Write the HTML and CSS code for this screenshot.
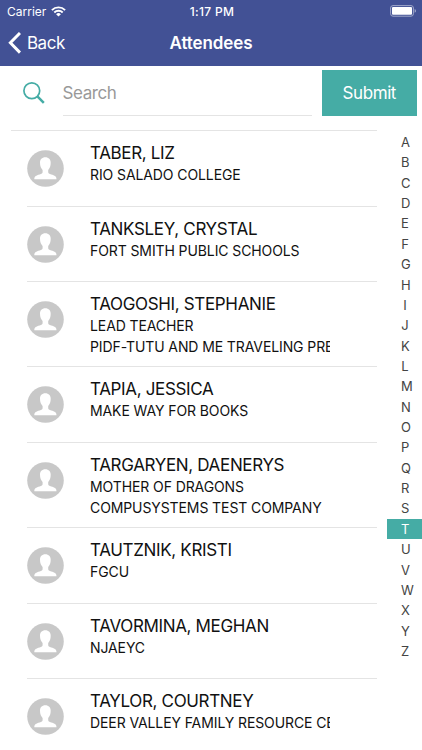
FILE: index.html
```
<!DOCTYPE html>
<html lang="en">
<head>
  <meta charset="UTF-8" />
  <meta name="viewport" content="width=device-width, initial-scale=1.0"/>
  <title>Attendees</title>
  <link rel="stylesheet" href="styles.css">
</head>
<body>
  <svg class="defs" width="0" height="0">
    <symbol id="avatar" viewBox="0 0 37 37">
      <circle cx="18.5" cy="18.5" r="18.3" fill="#c8c8c8"/>
      <path fill="#fff" d="M18.3 7.2c-3.400 0-5.400 2.300-5.300 5.500 0 3.300 1 5.500 2.600 7.200v2.200c0 1.400-1 1.800-3 2.400-3.500 1-5.300 1.700-5.300 4.700h22.200c0-3-1.800-3.700-5.300-4.700-2-.6-3-1-3-2.400v-2.200c1.600-1.700 2.500-3.900 2.500-7.200 0-3.200-2-5.500-5.400-5.500z"/>
    </symbol>
  </svg>

  <header>
    <div class="status-bar">
      <div class="carrier">
        <span>Carrier</span>
        <svg width="15" height="11" viewBox="0 0 15 11" fill="none" stroke="#fff" stroke-width="1.9">
          <path d="M.9 4.100a9.300 9.300 0 0 1 13.200 0M3.300 6.500a5.900 5.900 0 0 1 8.400 0"/>
          <path fill="#fff" stroke="none" d="M7.500 10.600L5.100 8.200a3.400 3.400 0 0 1 4.800 0z"/>
        </svg>
      </div>
      <div class="time">1:17 PM</div>
      <svg class="battery" width="27" height="12" viewBox="0 0 27 12">
        <rect x=".6" y=".6" width="22.800" height="10.600" rx="2.400" fill="none" stroke="#a0a8ca"/>
        <rect x="2" y="2" width="20" height="7.800" rx="1" fill="#fff"/>
        <path d="M24.600 4c1.900.6 1.900 3.200 0 3.800z" fill="#a0a8ca"/>
      </svg>
    </div>
    <div class="nav-bar">
      <a class="back" href="#">
        <svg width="13" height="22" viewBox="0 0 13 22" fill="none" stroke="#fff" stroke-width="3">
          <path d="M12 1L2.400 10.800l9.600 9.800"/>
        </svg>
        <span>Back</span>
      </a>
      <h1>Attendees</h1>
    </div>
  </header>

  <form class="search-bar" id="searchForm">
    <svg width="22" height="22" viewBox="0 0 22 22" fill="none" stroke="#45aca5">
      <circle cx="8.800" cy="8.800" r="7.900" stroke-width="1.700"/>
      <path d="M14.400 14.400l6.400 6.400" stroke-width="2.500"/>
    </svg>
    <input type="text" id="search" placeholder="Search" />
    <button type="submit">Submit</button>
  </form>

  <main>
    <ul class="attendees">
      <li>
        <svg class="avatar"><use href="#avatar"/></svg>
        <div class="info">
          <h2>TABER, LIZ</h2>
          <p>RIO SALADO COLLEGE</p>
        </div>
      </li>
      <li>
        <svg class="avatar"><use href="#avatar"/></svg>
        <div class="info">
          <h2>TANKSLEY, CRYSTAL</h2>
          <p>FORT SMITH PUBLIC SCHOOLS</p>
        </div>
      </li>
      <li class="with-title">
        <svg class="avatar"><use href="#avatar"/></svg>
        <div class="info">
          <h2>TAOGOSHI, STEPHANIE</h2>
          <p>LEAD TEACHER</p>
          <p>PIDF-TUTU AND ME TRAVELING PRE</p>
        </div>
      </li>
      <li>
        <svg class="avatar"><use href="#avatar"/></svg>
        <div class="info">
          <h2>TAPIA, JESSICA</h2>
          <p>MAKE WAY FOR BOOKS</p>
        </div>
      </li>
      <li class="with-title">
        <svg class="avatar"><use href="#avatar"/></svg>
        <div class="info">
          <h2>TARGARYEN, DAENERYS</h2>
          <p>MOTHER OF DRAGONS</p>
          <p>COMPUSYSTEMS TEST COMPANY</p>
        </div>
      </li>
      <li>
        <svg class="avatar"><use href="#avatar"/></svg>
        <div class="info">
          <h2>TAUTZNIK, KRISTI</h2>
          <p>FGCU</p>
        </div>
      </li>
      <li>
        <svg class="avatar"><use href="#avatar"/></svg>
        <div class="info">
          <h2>TAVORMINA, MEGHAN</h2>
          <p>NJAEYC</p>
        </div>
      </li>
      <li>
        <svg class="avatar"><use href="#avatar"/></svg>
        <div class="info">
          <h2>TAYLOR, COURTNEY</h2>
          <p>DEER VALLEY FAMILY RESOURCE CE</p>
        </div>
      </li>
    </ul>

    <nav class="letters">
      <a>A</a>
      <a>B</a>
      <a>C</a>
      <a>D</a>
      <a>E</a>
      <a>F</a>
      <a>G</a>
      <a>H</a>
      <a>I</a>
      <a>J</a>
      <a>K</a>
      <a>L</a>
      <a>M</a>
      <a>N</a>
      <a>O</a>
      <a>P</a>
      <a>Q</a>
      <a>R</a>
      <a>S</a>
      <a class="active">T</a>
      <a>U</a>
      <a>V</a>
      <a>W</a>
      <a>X</a>
      <a>Y</a>
      <a>Z</a>
    </nav>
  </main>
</body>
</html>
```
FILE: styles.css
```
* {
  box-sizing: border-box;
  margin: 0;
  padding: 0;
}

body {
  font-family: Inter, "Liberation Sans", sans-serif;
  height: 750px;
  display: flex;
  flex-direction: column;
  overflow: hidden;
  background-color: #fff;
  color: #111;
}

.defs {
  display: none;
}

header {
  height: 65.5px;
  flex-shrink: 0;
  background-color: #425195;
  color: #fff;
}

.status-bar {
  height: 22px;
  padding: 0 5px 0 7px;
  display: grid;
  grid-template-columns: 1fr auto 1fr;
  align-items: center;
  font-size: 12px;
}

.carrier {
  display: flex;
  align-items: center;
  gap: 5px;
}

.time {
  font-weight: 500;
  letter-spacing: 0.3px;
}

.battery {
  justify-self: end;
}

.nav-bar {
  height: 42px;
  padding: 0 8px;
  display: grid;
  grid-template-columns: 1fr auto 1fr;
  align-items: center;
}

.back {
  display: flex;
  align-items: center;
  gap: 6px;
  color: #fff;
  font-size: 17px;
  letter-spacing: -0.5px;
  text-decoration: none;
}

h1 {
  font-size: 17px;
  font-weight: 600;
  letter-spacing: -0.1px;
}

.search-bar {
  height: 64.5px;
  flex-shrink: 0;
  padding: 4.5px 5px 0 23px;
  display: flex;
  align-items: flex-start;
}

.search-bar svg {
  margin-top: 12px;
}

input {
  width: 249px;
  height: 46px;
  margin: 0 10px 0 17.5px;
  border: none;
  border-bottom: 1px solid #e4e4e4;
  background: transparent;
  font: inherit;
  font-size: 17px;
  letter-spacing: -0.4px;
  outline: none;
}

input::placeholder {
  color: #999;
}

button {
  flex: 1;
  height: 46px;
  border: none;
  background-color: #45aca5;
  color: #fff;
  font: inherit;
  font-size: 17px;
  letter-spacing: -0.4px;
}

main {
  flex: 1;
  min-height: 0;
  display: flex;
  justify-content: space-between;
}

.attendees {
  width: 377px;
  padding-left: 11px;
  list-style: none;
}

/* the first divider is wider than the ones between rows */
.attendees::before {
  content: "";
  display: block;
  height: 1px;
  background-color: #e4e4e4;
}

li {
  height: 75.7px;
  margin-left: 16px;
  display: flex;
  gap: 26.5px;
  border-bottom: 1px solid #e4e4e4;
}

li.with-title {
  height: 84.9px;
}

.avatar {
  width: 37px;
  height: 37px;
  margin: 19px 0 0 -0.5px;
  flex-shrink: 0;
}

.info {
  width: 240px;
  padding-top: 11px;
  overflow: hidden;
  white-space: nowrap;
}

h2 {
  font-size: 17px;
  font-weight: 400;
  line-height: 22px;
  letter-spacing: -0.34px;
}

p {
  font-size: 14px;
  line-height: 21.4px;
  letter-spacing: -0.1px;
}

.with-title p {
  line-height: 21px;
}

.letters {
  width: 35px;
  padding-top: 2px;
}

.letters a {
  display: block;
  height: 20.36px;
  padding: 0 13px 0 14px;
  font-size: 13px;
  line-height: 20.36px;
  text-align: center;
  color: #444;
}

.letters .active {
  background-color: #45aca5;
  color: #fff;
}
```
